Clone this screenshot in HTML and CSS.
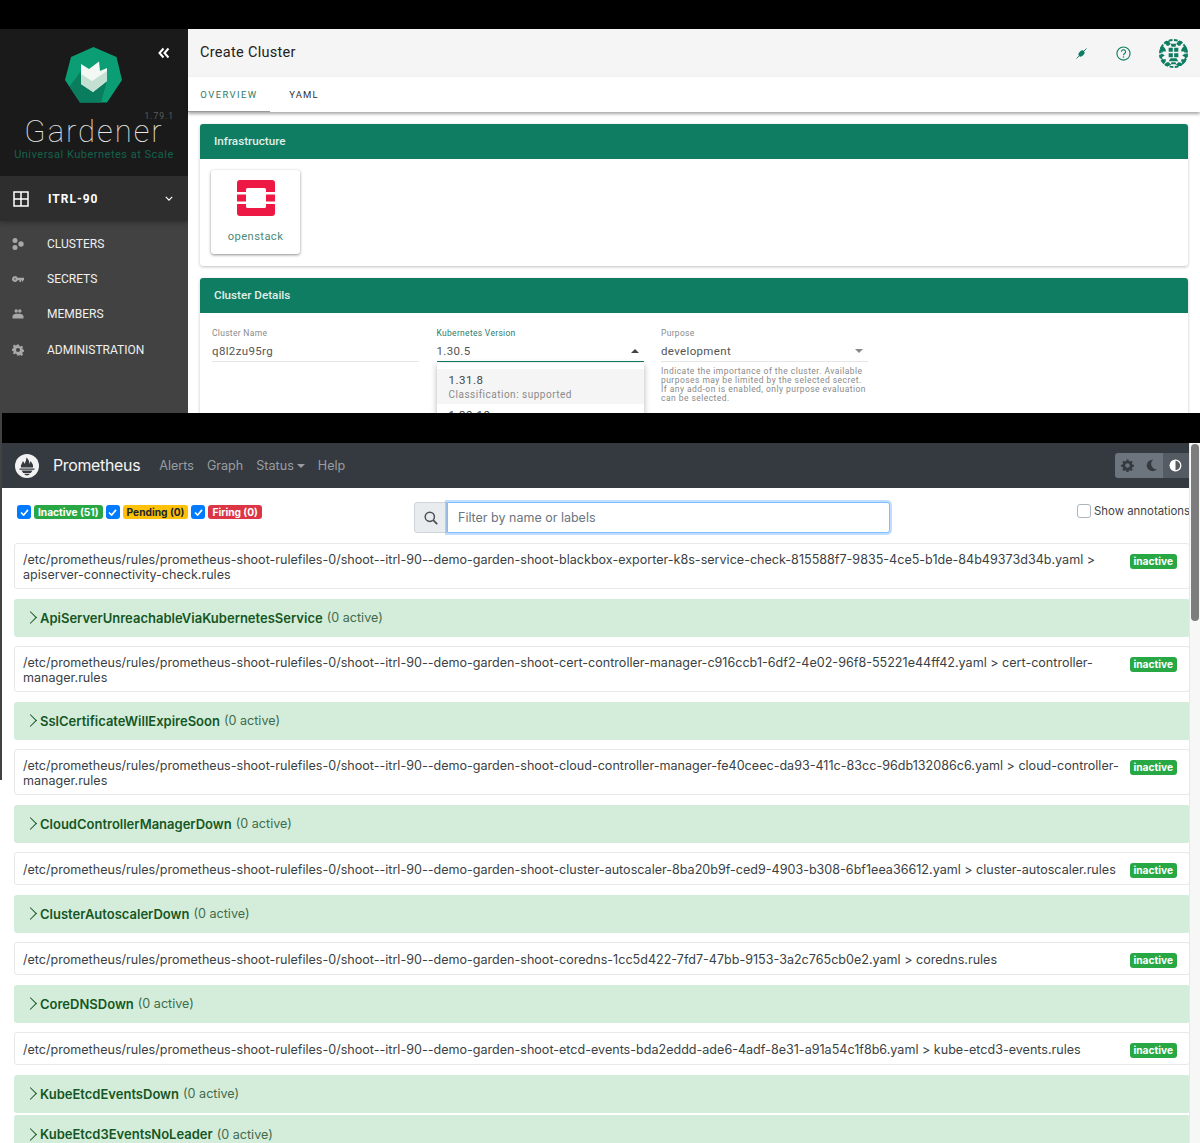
FILE: index.html
```html
<!DOCTYPE html>
<html lang="en">
<head>
    <meta charset="UTF-8">
    <meta name="viewport" content="width=device-width, initial-scale=1.0">
    <title>Gardener and Prometheus</title>
    <link rel="stylesheet" href="styles.css">
</head>
<body>
    <div class="top-strip"></div>

    <!-- Gardener dashboard -->
    <section class="gardener">
        <aside class="sidebar">
            <div class="brand">
                <svg class="collapse-icon" viewBox="0 0 12 12"><path d="M5.500 1.500 1.500 6l4 4.500M10.500 1.500 6.500 6l4 4.500" fill="none" stroke="#fff" stroke-width="2"/></svg>
                <svg class="brand-logo" viewBox="0 0 57 56">
                    <path d="M28.500 0 51.500 10 57 33 42 55.500H15L0 33 6 10Z" fill="#0b9e74"/>
                    <path d="M16 24 4.500 39.500 15 55.500H36L42 34 28 45 16 37Z" fill="#0a7d5e"/>
                    <path d="M16 17 24 22 34 14.500 35 24 42 21V34L28 45 16 37Z" fill="#f4f8f5"/>
                    <path d="M16 27 27 34 42 24V34L28 45 16 37Z" fill="#c4e0d2"/>
                </svg>
                <div class="brand-version">1.79.1</div>
                <div class="brand-name">Gardener</div>
                <div class="brand-tag">Universal Kubernetes at Scale</div>
            </div>
            <div class="project">
                <svg class="project-icon" viewBox="0 0 16 16"><path d="M1 1h14v14H1zM8 1v14M1 8h14" fill="none" stroke="#fff" stroke-width="1.500"/></svg>
                <span class="project-name">ITRL-90</span>
                <svg class="project-chevron" viewBox="0 0 10 6"><path d="M1 1l4 4 4-4" fill="none" stroke="#fff" stroke-width="1.500"/></svg>
            </div>
            <nav class="side-nav">
                <a class="side-item">
                    <svg class="side-icon" viewBox="0 0 12 12"><circle cx="3" cy="2.500" r="2.500"/><circle cx="3" cy="9.500" r="2.500"/><circle cx="9" cy="6" r="2.700"/></svg>
                    CLUSTERS
                </a>
                <a class="side-item">
                    <svg class="side-icon" viewBox="0 0 12 12"><path d="M3 3a3 3 0 1 0 2.700 4.300H7.500V9H9V7.300h.8V8.500h1.300V7.300h.9V4.700H5.700A3 3 0 0 0 3 3zm0 2.200a.8.800 0 1 1 0 1.600.8.800 0 0 1 0-1.600z"/></svg>
                    SECRETS
                </a>
                <a class="side-item">
                    <svg class="side-icon" viewBox="0 0 12 12"><circle cx="4.200" cy="3" r="1.700"/><circle cx="7.800" cy="3" r="1.700"/><path d="M.5 10.500V8.500C.5 7 2.500 5.800 4.200 5.800H7.800C9.500 5.800 11.500 7 11.500 8.500V10.500Z"/></svg>
                    MEMBERS
                </a>
                <a class="side-item">
                    <svg class="side-icon" viewBox="0 0 12 12"><path d="M5 .5h2l.3 1.500 1.100.5 1.300-.8 1.400 1.400-.8 1.300.5 1.100 1.500.3v2l-1.500.3-.5 1.100.8 1.300-1.400 1.400-1.300-.8-1.100.5L7 11.500H5l-.3-1.500-1.100-.5-1.300.8L.9 9.400l.8-1.300-.5-1.100L-.3 6.700v-2l1.500-.3.5-1.100-.8-1.300L2.300.6l1.300.8 1.100-.5zM6 4a2 2 0 1 0 0 4 2 2 0 0 0 0-4z"/></svg>
                    ADMINISTRATION
                </a>
            </nav>
        </aside>

        <div class="main">
            <header class="toolbar">
                <h1 class="toolbar-title">Create Cluster</h1>
                <svg class="tool-plug" viewBox="0 0 12 12"><path d="M.5 11.500 3.500 8.500M8.500 3.500l3-3" stroke="#0e7d62" stroke-width="1"/><ellipse cx="6" cy="6" rx="3.800" ry="2.600" transform="rotate(-45 6 6)" fill="#0e7d62"/></svg>
                <svg class="tool-help" viewBox="0 0 16 16">
                    <circle cx="8" cy="8" r="7" fill="none" stroke="#0e7d62" stroke-width="1.200"/>
                    <path d="M5.800 6.200a2.200 2.200 0 1 1 3.400 1.900c-.8.500-1.200.9-1.200 1.800" fill="none" stroke="#0e7d62" stroke-width="1.200"/>
                    <circle cx="8" cy="11.800" r=".8" fill="#0e7d62"/>
                </svg>
                <svg class="tool-avatar" viewBox="0 0 30 30">
                    <defs><clipPath id="avatarClip"><circle cx="15" cy="15" r="15"/></clipPath></defs>
                    <circle cx="15" cy="15" r="14" fill="none" stroke="#0e7d62" stroke-width="2" stroke-dasharray="4 1.500"/>
                    <g clip-path="url(#avatarClip)" fill="#0e7d62">
                        <path d="M5 2h5l2 3h6l2-3h5l-3 5h-2l-2-2-1 3h-4l-1-3-2 2H8zM0 8h5l2 3v2H4l-1 2 3 2-3 2 1 2h3v2l-2 3H0l3-5-3-3 3-3zM30 8h-5l-2 3v2h3l1 2-3 2 3 2-1 2h-3v2l2 3h5l-3-5 3-3-3-3zM5 28l3-4h2l2 2 1-2h4l1 2 2-2h2l3 4h-5l-3-2h-4l-3 2z"/>
                        <path d="M10 9h4.300v4.300H10zM15.700 9H20v4.300h-4.300zM10 14.700h4.300V19H10zM15.700 14.700H20V19h-4.300zM12 20h6l2 3h-10z"/>
                    </g>
                </svg>
            </header>
            <div class="tabs">
                <a class="tab tab-active">OVERVIEW</a>
                <a class="tab tab-yaml">YAML</a>
            </div>
            <div class="content">
                <div class="card">
                    <div class="card-head">Infrastructure</div>
                    <div class="infra-body">
                        <div class="infra-tile">
                            <svg class="openstack-logo" viewBox="0 0 38 36">
                                <path d="M3 0H35a3 3 0 0 1 3 3V12H29V9.500a1.500 1.500 0 0 0-1.500-1.500H10.500A1.500 1.500 0 0 0 9 9.500V12H0V3a3 3 0 0 1 3-3z" fill="#ed1944"/>
                                <path d="M0 14.500H9V21.500H0zM29 14.500H38V21.500H29z" fill="#ed1944"/>
                                <path d="M0 24H9V26.500A1.500 1.500 0 0 0 10.500 28H27.500A1.500 1.500 0 0 0 29 26.500V24H38V33a3 3 0 0 1-3 3H3a3 3 0 0 1-3-3z" fill="#ed1944"/>
                            </svg>
                            <span class="infra-name">openstack</span>
                        </div>
                    </div>
                </div>
                <div class="card">
                    <div class="card-head">Cluster Details</div>
                    <div class="details-body">
                        <div class="field">
                            <label class="field-label">Cluster Name</label>
                            <div class="field-value">q8l2zu95rg</div>
                        </div>
                        <div class="field">
                            <label class="field-label label-active">Kubernetes Version</label>
                            <div class="field-value value-active">1.30.5<span class="caret caret-up"></span></div>
                            <div class="version-menu">
                                <div class="version-option option-selected">
                                    <div>1.31.8</div>
                                    <div class="option-sub">Classification: supported</div>
                                </div>
                                <div class="version-option">
                                    <div>1.30.10</div>
                                </div>
                            </div>
                        </div>
                        <div class="field">
                            <label class="field-label">Purpose</label>
                            <div class="field-value">development<span class="caret"></span></div>
                            <p class="field-hint">Indicate the importance of the cluster. Available purposes may be limited by the selected secret. If any add-on is enabled, only purpose evaluation can be selected.</p>
                        </div>
                    </div>
                </div>
            </div>
        </div>
    </section>

    <div class="mid-strip"></div>
    <div class="under-strip"></div>

    <!-- Prometheus alerts -->
    <section class="prom">
        <nav class="prom-nav">
            <svg class="prom-logo" viewBox="0 0 24 24">
                <circle cx="12" cy="12" r="12" fill="#f2f2f2"/>
                <path d="M6 13.500C5.500 10.500 7.500 9.500 7.800 7 9 8 9.300 9 9.300 10 10.500 8 11.500 6 11.300 3.500 13.500 5 14.500 7.500 14.500 10 15 9 15.500 8 15.500 7 17.500 9.500 18.500 11 18 13.500Z" fill="#343a40"/>
                <path d="M4.500 14.500H19.500V15.700H4.500zM6.500 16.500H17.500L15.800 19H8.200zM9.300 19.800H14.700C14.500 21 13.200 21.500 12 21.500S9.500 21 9.300 19.800z" fill="#343a40"/>
            </svg>
            <a class="prom-brand">Prometheus</a>
            <a class="prom-link">Alerts</a>
            <a class="prom-link">Graph</a>
            <a class="prom-link">Status<span class="nav-caret"></span></a>
            <a class="prom-link">Help</a>
            <div class="theme-group">
                <span class="theme-btn">
                    <svg viewBox="0 0 16 16" width="13" height="13"><path fill="#343a40" d="M6.800.5h2.400l.4 2 1.400.6 1.700-1.100 1.700 1.700-1.100 1.700.6 1.400 2 .4v2.400l-2 .4-.6 1.400 1.100 1.700-1.700 1.700-1.700-1.100-1.400.6-.4 2H6.800l-.4-2-1.400-.6-1.700 1.100L1.600 13l1.100-1.700-.6-1.400-2-.4V7.100l2-.4.6-1.400L1.600 3.600 3.300 2l1.700 1.100 1.400-.6zM8 5.200a2.800 2.800 0 1 0 0 5.600 2.800 2.800 0 0 0 0-5.600z"/></svg>
                </span>
                <span class="theme-btn">
                    <svg viewBox="0 0 16 16" width="13" height="13"><path fill="#343a40" d="M10 1a7 7 0 1 0 4.500 11.500A6.500 6.500 0 0 1 10 1z"/></svg>
                </span>
                <span class="theme-btn theme-active">
                    <svg viewBox="0 0 16 16" width="13" height="13"><circle cx="8" cy="8" r="6.500" fill="none" stroke="#fff" stroke-width="1.600"/><path fill="#fff" d="M8 1a7 7 0 0 0 0 14z"/></svg>
                </span>
            </div>
        </nav>

        <div class="filters">
            <div class="state-toggles">
                <span class="check"><svg viewBox="0 0 10 8"><path d="M1 4l3 3 5-6" fill="none" stroke="#fff" stroke-width="1.800"/></svg></span>
                <span class="badge badge-inactive">Inactive (51)</span>
                <span class="check"><svg viewBox="0 0 10 8"><path d="M1 4l3 3 5-6" fill="none" stroke="#fff" stroke-width="1.800"/></svg></span>
                <span class="badge badge-pending">Pending (0)</span>
                <span class="check"><svg viewBox="0 0 10 8"><path d="M1 4l3 3 5-6" fill="none" stroke="#fff" stroke-width="1.800"/></svg></span>
                <span class="badge badge-firing">Firing (0)</span>
            </div>
            <div class="search">
                <span class="search-addon">
                    <svg viewBox="0 0 14 14" width="14" height="14"><circle cx="5.800" cy="5.800" r="4.600" fill="none" stroke="#495057" stroke-width="1.500"/><path d="M9.200 9.200l4 4" stroke="#495057" stroke-width="1.800"/></svg>
                </span>
                <input class="search-input" type="text" placeholder="Filter by name or labels">
            </div>
            <label class="annotations"><span class="check-empty"></span>Show annotations</label>
        </div>

        <div class="rule-list">
            <div class="file-row row-tall">
                <div class="file-path">/etc/prometheus/rules/prometheus-shoot-rulefiles-0/shoot--itrl-90--demo-garden-shoot-blackbox-exporter-k8s-service-check-815588f7-9835-4ce5-b1de-84b49373d34b.yaml &gt; apiserver-connectivity-check.rules</div>
                <span class="state-badge">inactive</span>
            </div>
            <div class="alert-row"><span class="chev"></span><strong>ApiServerUnreachableViaKubernetesService</strong><span class="active-count">(0 active)</span></div>

            <div class="file-row row-tall">
                <div class="file-path">/etc/prometheus/rules/prometheus-shoot-rulefiles-0/shoot--itrl-90--demo-garden-shoot-cert-controller-manager-c916ccb1-6df2-4e02-96f8-55221e44ff42.yaml &gt; cert-controller-manager.rules</div>
                <span class="state-badge">inactive</span>
            </div>
            <div class="alert-row"><span class="chev"></span><strong>SslCertificateWillExpireSoon</strong><span class="active-count">(0 active)</span></div>

            <div class="file-row row-tall">
                <div class="file-path">/etc/prometheus/rules/prometheus-shoot-rulefiles-0/shoot--itrl-90--demo-garden-shoot-cloud-controller-manager-fe40ceec-da93-411c-83cc-96db132086c6.yaml &gt; cloud-controller-manager.rules</div>
                <span class="state-badge">inactive</span>
            </div>
            <div class="alert-row"><span class="chev"></span><strong>CloudControllerManagerDown</strong><span class="active-count">(0 active)</span></div>

            <div class="file-row">
                <div class="file-path">/etc/prometheus/rules/prometheus-shoot-rulefiles-0/shoot--itrl-90--demo-garden-shoot-cluster-autoscaler-8ba20b9f-ced9-4903-b308-6bf1eea36612.yaml &gt; cluster-autoscaler.rules</div>
                <span class="state-badge">inactive</span>
            </div>
            <div class="alert-row"><span class="chev"></span><strong>ClusterAutoscalerDown</strong><span class="active-count">(0 active)</span></div>

            <div class="file-row">
                <div class="file-path">/etc/prometheus/rules/prometheus-shoot-rulefiles-0/shoot--itrl-90--demo-garden-shoot-coredns-1cc5d422-7fd7-47bb-9153-3a2c765cb0e2.yaml &gt; coredns.rules</div>
                <span class="state-badge">inactive</span>
            </div>
            <div class="alert-row"><span class="chev"></span><strong>CoreDNSDown</strong><span class="active-count">(0 active)</span></div>

            <div class="file-row">
                <div class="file-path">/etc/prometheus/rules/prometheus-shoot-rulefiles-0/shoot--itrl-90--demo-garden-shoot-etcd-events-bda2eddd-ade6-4adf-8e31-a91a54c1f8b6.yaml &gt; kube-etcd3-events.rules</div>
                <span class="state-badge">inactive</span>
            </div>
            <div class="alert-row"><span class="chev"></span><strong>KubeEtcdEventsDown</strong><span class="active-count">(0 active)</span></div>
            <div class="alert-row alert-next"><span class="chev"></span><strong>KubeEtcd3EventsNoLeader</strong><span class="active-count">(0 active)</span></div>
        </div>

        <div class="scrollbar"><div class="scroll-thumb"></div></div>
    </section>
</body>
</html>
```

FILE: styles.css
```css
* {
    box-sizing: border-box;
}

html, body {
    height: 1143px;
    overflow: hidden;
}

body {
    position: relative;
    margin: 0;
    background-color: #fff;
    font-family: Roboto, "Liberation Sans", sans-serif;
}

.top-strip {
    height: 29px;
    background-color: #000;
}

.mid-strip {
    height: 30px;
    margin-left: 2px;
    background-color: #000;
}

/* edge of the window behind the second screenshot */
.under-strip {
    position: absolute;
    top: 413px;
    left: 0;
    width: 2px;
    height: 367px;
    background-color: #424242;
}

/* Gardener */
.gardener {
    display: flex;
    height: 384px;
    overflow: hidden;
}

.sidebar {
    width: 188px;
    flex-shrink: 0;
    display: flex;
    flex-direction: column;
    background-color: #424242;
}

.brand {
    position: relative;
    height: 147px;
    flex-shrink: 0;
    padding-top: 18px;
    background-color: #1a1a1a;
    text-align: center;
}

.collapse-icon {
    position: absolute;
    top: 18px;
    left: 158px;
    width: 12px;
    height: 12px;
}

.brand-logo {
    display: block;
    width: 57px;
    height: 56px;
    margin-left: 65px;
}

.brand-version {
    position: absolute;
    top: 82px;
    right: 14px;
    font-size: 8.500px;
    line-height: 10px;
    letter-spacing: 1px;
    color: #5c5c5c;
}

.brand-name {
    margin-top: 19px;
    font-size: 31px;
    line-height: 20px;
    font-weight: 100;
    letter-spacing: 2px;
    color: #e8e8e8;
}

.brand-tag {
    margin-top: 6px;
    font-size: 11px;
    line-height: 13px;
    letter-spacing: .5px;
    color: #14624c;
}

.project {
    display: flex;
    align-items: center;
    height: 45px;
    flex-shrink: 0;
    padding: 0 15px 0 13px;
    background-color: #2e2e2e;
    box-shadow: 0 2px 5px rgba(0, 0, 0, 0.3);
    color: #fff;
}

.project-icon {
    width: 16px;
    height: 16px;
}

.project-name {
    flex: 1;
    margin-left: 19px;
    font-size: 12px;
    font-weight: 700;
    letter-spacing: 1px;
}

.project-chevron {
    width: 8px;
    height: 5px;
}

.side-nav {
    padding-top: 5px;
}

.side-item {
    display: flex;
    align-items: center;
    height: 35.400px;
    padding-left: 12px;
    font-size: 12px;
    color: #f0f0f0;
}

.side-icon {
    width: 12px;
    height: 12px;
    margin-right: 23px;
    fill: #a8a8a8;
}

.main {
    flex: 1;
    display: flex;
    flex-direction: column;
    background-color: #fff;
}

.toolbar {
    display: flex;
    align-items: center;
    flex-shrink: 0;
    height: 48px;
    padding: 0 12px;
    background-color: #f5f5f5;
}

.toolbar-title {
    flex: 1;
    margin: 0 0 1px;
    font-size: 14.500px;
    font-weight: 400;
    letter-spacing: .3px;
    color: #222;
}

.tool-plug {
    width: 11px;
    height: 11px;
    margin-right: 29px;
}

.tool-help {
    width: 15px;
    height: 15px;
    margin-right: 28px;
}

.tool-avatar {
    width: 29px;
    height: 29px;
}

.tabs {
    position: relative;
    display: flex;
    flex-shrink: 0;
    height: 35px;
    background-color: #fff;
    box-shadow: 0 2px 3px rgba(0, 0, 0, 0.35);
}

.tab {
    display: flex;
    align-items: center;
    justify-content: center;
    width: 82px;
    padding-bottom: 1px;
    font-size: 9.500px;
    font-weight: 400;
    letter-spacing: 1.200px;
    color: #333;
}

.tab-yaml {
    width: 68px;
}

.tab-active {
    padding-bottom: 0;
    letter-spacing: 1.400px;
    color: #2f7b66;
    border-bottom: 1px solid #999;
}

.content {
    flex: 1;
    display: flex;
    flex-direction: column;
    gap: 12px;
    padding: 12px 12px 0;
}

.card {
    flex-shrink: 0;
    border-radius: 3px;
    background-color: #fff;
    box-shadow: 0 1px 3px rgba(0, 0, 0, 0.25);
}

.card-head {
    display: flex;
    align-items: center;
    height: 35px;
    padding: 0 0 2px 14px;
    background-color: #0e7d62;
    border-radius: 3px 3px 0 0;
    font-size: 11.700px;
    font-weight: 500;
    color: #e0efe9;
}

.infra-body {
    height: 107px;
    padding: 11px 11px;
}

.infra-tile {
    display: flex;
    flex-direction: column;
    align-items: center;
    width: 89px;
    height: 84px;
    padding-top: 10px;
    border-radius: 3px;
    box-shadow: 0 1px 3px rgba(0, 0, 0, 0.45);
}

.openstack-logo {
    width: 38px;
    height: 36px;
}

.infra-name {
    margin-top: 14px;
    font-size: 11.200px;
    letter-spacing: .4px;
    color: #4c8a78;
}

.details-body {
    display: flex;
    gap: 17.500px;
    height: 180px;
    padding: 15px 11px 0 12px;
}

.field {
    position: relative;
    width: 207px;
}

.field-label {
    display: block;
    font-size: 8.500px;
    line-height: 11px;
    letter-spacing: .3px;
    color: #8a8a8a;
}

.label-active {
    color: #2f7b66;
}

.field-value {
    display: flex;
    align-items: center;
    justify-content: space-between;
    height: 23px;
    padding: 1px 5px 0 0;
    border-bottom: 1px solid #e6e6e6;
    font-size: 11.500px;
    letter-spacing: .35px;
    color: #555;
}

.value-active {
    border-bottom: 1px solid #0e7d62;
}

.caret {
    width: 0;
    height: 0;
    border-left: 4px solid transparent;
    border-right: 4px solid transparent;
    border-top: 4px solid #888;
}

.caret-up {
    border-top: 0;
    border-bottom: 4px solid #444;
}

.version-menu {
    position: absolute;
    top: 35px;
    left: 0;
    width: 100%;
    padding-top: 6px;
    background-color: #fff;
    box-shadow: 0 2px 6px rgba(0, 0, 0, 0.3);
}

.version-option {
    height: 35px;
    padding: 4px 12px 0;
    font-size: 11.500px;
    letter-spacing: .5px;
    line-height: 14px;
    color: #444;
}

.option-selected {
    background-color: #f5f5f5;
}

.option-sub {
    font-size: 10px;
    line-height: 15px;
    color: #8a8a8a;
}

.field-hint {
    margin: 5px 0 0;
    font-size: 8.500px;
    line-height: 9px;
    letter-spacing: .45px;
    color: #8a8a8a;
}

/* Prometheus */
.prom {
    position: relative;
    height: 700px;
    margin-left: 2px;
    overflow: hidden;
    background-color: #fff;
    font-family: Inter, "Liberation Sans", sans-serif;
    color: #3a3f44;
}

.prom-nav {
    display: flex;
    align-items: center;
    height: 45px;
    padding-left: 13px;
    background-color: #343a40;
}

.prom-logo {
    width: 24px;
    height: 24px;
    margin-right: 14px;
}

.prom-brand {
    margin-right: 19px;
    font-size: 15.900px;
    letter-spacing: -.3px;
    color: #f4f4f4;
}

.prom-link {
    display: flex;
    align-items: center;
    margin-right: 13px;
    font-size: 12.600px;
    color: #9a9da0;
}

.nav-caret {
    width: 0;
    height: 0;
    margin-left: 3px;
    border-left: 4px solid transparent;
    border-right: 4px solid transparent;
    border-top: 4px solid #9a9da0;
}

.theme-group {
    display: flex;
    height: 25px;
    margin-left: auto;
    margin-right: 10px;
    border-radius: 3px;
    overflow: hidden;
    background-color: #6c757d;
}

.theme-btn {
    display: flex;
    align-items: center;
    justify-content: center;
    width: 24px;
}

.theme-active {
    width: 27px;
    padding-left: 6px;
    justify-content: flex-start;
    background-color: #545b62;
}

.filters {
    display: flex;
    align-items: flex-start;
    height: 55px;
    padding: 14px 0 0 15px;
}

.state-toggles {
    display: flex;
    align-items: center;
    gap: 3px;
    width: 397px;
    height: 20px;
}

.check {
    display: flex;
    align-items: center;
    justify-content: center;
    width: 14px;
    height: 14px;
    border-radius: 3px;
    background-color: #007bff;
}

.check svg {
    width: 9px;
    height: 7px;
}

.badge {
    padding: 1px 4px;
    border-radius: 3px;
    font-size: 10.200px;
    font-weight: 700;
    line-height: 12px;
    color: #fff;
}

.badge-inactive {
    background-color: #28a745;
}

.badge-pending {
    background-color: #ffc107;
    color: #212529;
}

.badge-firing {
    background-color: #dc3545;
}

.search {
    display: flex;
    width: 476px;
    height: 31px;
}

.search-addon {
    display: flex;
    align-items: center;
    justify-content: center;
    width: 33px;
    border: 1px solid #ced4da;
    border-radius: 3px 0 0 3px;
    background-color: #e9ecef;
}

.search-input {
    flex: 1;
    min-width: 0;
    padding: 0 10px;
    border: 1px solid #80bdff;
    border-radius: 0 3px 3px 0;
    outline: 0;
    box-shadow: 0 0 0 2px rgba(0, 123, 255, .25);
    font-family: Inter, "Liberation Sans", sans-serif;
    font-size: 12.500px;
    color: #495057;
}

.search-input::placeholder {
    color: #6c757d;
}

.annotations {
    display: flex;
    align-items: center;
    height: 16px;
    margin: 1px 0 0 187px;
    font-size: 11.400px;
    white-space: nowrap;
    color: #444;
}

.check-empty {
    width: 14px;
    height: 14px;
    margin-right: 3px;
    border: 1px solid #adb5bd;
    border-radius: 3px;
    background-color: #fff;
}

.rule-list {
    display: flex;
    flex-direction: column;
    gap: 9.500px;
    width: 1176px;
    margin-left: 12px;
}

.file-row {
    display: flex;
    align-items: flex-start;
    justify-content: space-between;
    min-height: 33px;
    padding: 10px 12px 6px 8px;
    border: 1px solid #e6e8ea;
    border-radius: 3px;
    font-size: 12.570px;
    line-height: 14.500px;
}

.row-tall {
    min-height: 46px;
    padding-top: 9px;
}

.file-path {
    width: 1098px;
    color: #3a3f44;
}

.state-badge {
    padding: 2px 4px;
    border-radius: 3px;
    background-color: #28a745;
    font-size: 10.200px;
    font-weight: 700;
    line-height: 11px;
    color: #fff;
}

.row-tall .state-badge {
    margin-top: 1px;
}

.alert-row {
    display: flex;
    align-items: center;
    flex-shrink: 0;
    height: 38px;
    padding-left: 14px;
    border-radius: 3px;
    background-color: #d4edda;
    font-size: 13px;
    color: #3f6b4c;
}

.alert-row strong {
    font-weight: 600;
    color: #155724;
}

.active-count {
    margin-left: 4px;
    font-size: 12.600px;
}

.alert-next {
    margin-top: -7px;
}

.chev {
    width: 9px;
    height: 9px;
    margin-right: 5px;
    margin-left: -2px;
    border-top: 1.800px solid #155724;
    border-right: 1.800px solid #155724;
    transform: rotate(45deg);
}

.scrollbar {
    position: absolute;
    top: 0;
    right: 0;
    width: 11px;
    height: 100%;
    background-color: #f7f7f7;
    border-left: 1px solid #e8e8e8;
}

.scroll-thumb {
    width: 8px;
    height: 177px;
    margin: 1px 0 0 1px;
    border-radius: 4px;
    background-color: #7d7d7d;
}
```
